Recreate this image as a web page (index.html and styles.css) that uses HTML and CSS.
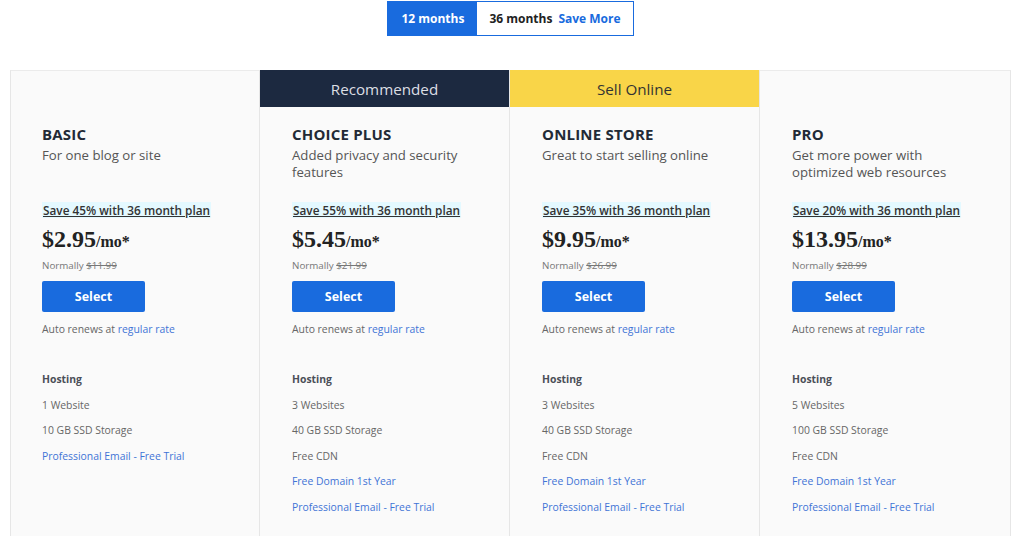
FILE: index.html
```html
<!DOCTYPE html>
<html>
<head>
<meta charset="utf-8">
<link rel="stylesheet" href="styles.css">
</head>
<body>
<div class="toggle-wrap">
  <div class="toggle">
    <div class="seg seg-active">12 months</div>
    <div class="seg seg-alt"><span class="dark">36 months</span><span class="save">Save More</span></div>
  </div>
</div>
<div class="plans">
  <div class="plan plan-edge">
    <div class="head"></div>
    <div class="body">
      <div class="name">BASIC</div>
      <div class="desc">For one blog or site</div>
      <div class="promo"><span>Save 45% with 36 month plan</span></div>
      <div class="price"><span class="amt">$2.95</span><span class="per">/mo*</span></div>
      <div class="normal">Normally <s>$11.99</s></div>
      <div class="btn">Select</div>
      <div class="renew">Auto renews at <span class="link">regular rate</span></div>
      <div class="feat-title">Hosting</div>
      <ul class="feats">
        <li>1 Website</li>
        <li>10 GB SSD Storage</li>
        <li class="link">Professional Email - Free Trial</li>
      </ul>
    </div>
  </div>
  <div class="plan">
    <div class="head head-dark">Recommended</div>
    <div class="body">
      <div class="name">CHOICE PLUS</div>
      <div class="desc">Added privacy and security features</div>
      <div class="promo"><span>Save 55% with 36 month plan</span></div>
      <div class="price"><span class="amt">$5.45</span><span class="per">/mo*</span></div>
      <div class="normal">Normally <s>$21.99</s></div>
      <div class="btn">Select</div>
      <div class="renew">Auto renews at <span class="link">regular rate</span></div>
      <div class="feat-title">Hosting</div>
      <ul class="feats">
        <li>3 Websites</li>
        <li>40 GB SSD Storage</li>
        <li>Free CDN</li>
        <li class="link">Free Domain 1st Year</li>
        <li class="link">Professional Email - Free Trial</li>
      </ul>
    </div>
  </div>
  <div class="plan">
    <div class="head head-yellow">Sell Online</div>
    <div class="body">
      <div class="name">ONLINE STORE</div>
      <div class="desc">Great to start selling online</div>
      <div class="promo"><span>Save 35% with 36 month plan</span></div>
      <div class="price"><span class="amt">$9.95</span><span class="per">/mo*</span></div>
      <div class="normal">Normally <s>$26.99</s></div>
      <div class="btn">Select</div>
      <div class="renew">Auto renews at <span class="link">regular rate</span></div>
      <div class="feat-title">Hosting</div>
      <ul class="feats">
        <li>3 Websites</li>
        <li>40 GB SSD Storage</li>
        <li>Free CDN</li>
        <li class="link">Free Domain 1st Year</li>
        <li class="link">Professional Email - Free Trial</li>
      </ul>
    </div>
  </div>
  <div class="plan plan-edge">
    <div class="head"></div>
    <div class="body">
      <div class="name">PRO</div>
      <div class="desc">Get more power with optimized web resources</div>
      <div class="promo"><span>Save 20% with 36 month plan</span></div>
      <div class="price"><span class="amt">$13.95</span><span class="per">/mo*</span></div>
      <div class="normal">Normally <s>$28.99</s></div>
      <div class="btn">Select</div>
      <div class="renew">Auto renews at <span class="link">regular rate</span></div>
      <div class="feat-title">Hosting</div>
      <ul class="feats">
        <li>5 Websites</li>
        <li>100 GB SSD Storage</li>
        <li>Free CDN</li>
        <li class="link">Free Domain 1st Year</li>
        <li class="link">Professional Email - Free Trial</li>
      </ul>
    </div>
  </div>
</div>
</body>
</html>
```
FILE: styles.css
```css
* { box-sizing: border-box; }
html, body { margin: 0; padding: 0; background: #fff; }
body {
  font-family: "Open Sans", "DejaVu Sans", sans-serif;
  color: #333;
  overflow: hidden;
  height: 536px;
}
.toggle-wrap {
  display: flex;
  justify-content: center;
  padding-top: 1px;
  padding-right: 3px;
}
.toggle {
  display: flex;
  border: 1px solid #196bde;
  height: 35px;
  background: #fff;
}
.seg {
  display: flex;
  align-items: center;
  font-size: 12px;
  font-weight: 700;
}
.seg-active {
  background: #196bde;
  color: #fff;
  width: 89px;
  justify-content: center;
}
.seg-alt {
  padding: 0 12px 0 12px;
  gap: 6px;
}
.dark { color: #222; }
.save { color: #196bde; }
.plans {
  display: grid;
  grid-template-columns: 250px 250px 250px 251px;
  margin: 34px 13px 0 10px;
}
.plan {
  display: flex;
  flex-direction: column;
  border-right: 1px solid #e6e6e6;
  background: #fafafa;
  min-height: 480px;
}
.plan:first-child { border-left: 1px solid #e6e6e6; }
.plan-edge { border-top: 1px solid #ebebeb; }
.plan-edge .head { height: 36px; }
.head {
  height: 37px;
  display: flex;
  align-items: center;
  justify-content: center;
  font-size: 15.2px;
}
.head-dark { background: #1c2940; color: #dcdfe4; }
.head-yellow { background: #f9d548; color: #333; }
.body {
  padding: 18px 44px 0 31px;
}
.plan + .plan .body { padding-left: 32px; }
.name {
  font-size: 15px;
  font-weight: 700;
  color: #222a36;
  line-height: 18px;
  letter-spacing: 0.2px;
}
.desc {
  font-size: 13.2px;
  color: #555;
  line-height: 17px;
  margin-top: 4px;
  height: 34px;
}
.promo {
  margin-top: 22px;
  font-size: 11.8px;
  font-weight: 600;
  line-height: 14px;
}
.promo span {
  background: #e4f9ff;
  text-decoration: underline;
  color: #333;
  padding: 0 1px;
}
.price {
  margin-top: 7px;
  font-family: "Liberation Serif", "DejaVu Serif", serif;
  font-weight: 700;
  color: #222;
  line-height: 30px;
}
.amt { font-size: 24px; }
.per { font-size: 16px; }
.normal {
  font-size: 9.8px;
  color: #777;
  line-height: 14px;
  margin-top: 2px;
}
.btn {
  margin-top: 8px;
  width: 103px;
  height: 31px;
  background: #196bde;
  border-radius: 2px;
  color: #fff;
  font-weight: 700;
  font-size: 12.5px;
  display: flex;
  align-items: center;
  justify-content: center;
}
.renew {
  margin-top: 10px;
  font-size: 10.4px;
  color: #666;
  line-height: 14px;
}
.link { color: #3f74d6; }
.feat-title {
  margin-top: 36px;
  font-size: 10.4px;
  font-weight: 700;
  color: #4a4f58;
  line-height: 14px;
}
.feats {
  list-style: none;
  margin: 0;
  padding: 0;
}
.feats li {
  font-size: 10.4px;
  color: #666;
  line-height: 14px;
  margin-top: 11.5px;
}
.feats li.link { color: #3f74d6; }
```
